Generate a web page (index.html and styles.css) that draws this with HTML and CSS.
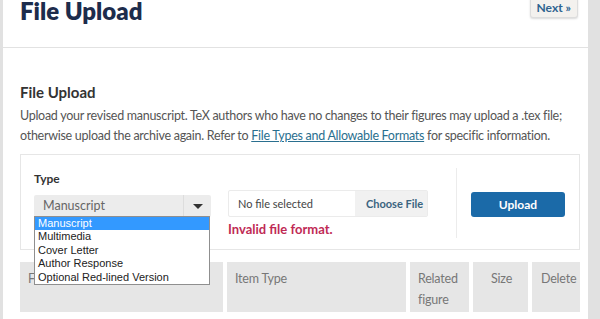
FILE: index.html
```html
<!DOCTYPE html>
<html>
<head>
  <meta charset="UTF-8">
  <title>File Upload</title>
  <link rel="stylesheet" href="styles.css">
</head>
<body>
  <div class="page">
    <div class="header">
      <h1>File Upload</h1>
      <a class="next" href="#">Next &raquo;</a>
    </div>

    <div class="section">
      <h3>File Upload</h3>
      <p>Upload your revised manuscript. TeX authors who have no changes to their figures may upload a .tex file;
        otherwise upload the archive again. Refer to <a href="#">File Types and Allowable Formats</a> for specific information.</p>

      <div class="panel">
        <div class="type-col">
          <label>Type</label>
          <div class="select">
            <span class="value">Manuscript</span>
            <span class="arrow"></span>
            <ul class="options">
              <li class="active">Manuscript</li>
              <li>Multimedia</li>
              <li>Cover Letter</li>
              <li>Author Response</li>
              <li>Optional Red-lined Version</li>
            </ul>
          </div>
        </div>
        <div class="file-col">
          <div class="file">
            <span class="fname">No file selected</span>
            <span class="choose">Choose File</span>
          </div>
          <div class="error">Invalid file format.</div>
        </div>
        <div class="btn-col">
          <button class="upload">Upload</button>
        </div>
      </div>

      <div class="table-head">
        <div class="th">File name</div>
        <div class="th">Item Type</div>
        <div class="th">Related figure</div>
        <div class="th">Size</div>
        <div class="th">Delete</div>
      </div>
    </div>
  </div>
</body>
</html>
```

FILE: styles.css
```css
body {margin:0;background:#e1e1e1;font-family:Lato,"Open Sans",sans-serif;color:#555;}
.page {background:#fff;margin-left:3px;width:585px;height:319px;overflow:hidden;}

.header {display:flex;justify-content:space-between;align-items:flex-start;height:47px;
  border-bottom:1px solid #e2e2e2;padding:0 10px 0 17px;}
h1 {margin:-4px 0 0;font-size:24px;line-height:30px;color:#1d2c4c;font-weight:800;}
.next {margin-top:-4px;padding:3px 6px 2px;font-size:12px;font-weight:bold;color:#2d6390;text-decoration:none;
  background:#f3f1ee;border:1px solid #ddd;border-radius:3px;box-shadow:0 1px 2px rgba(0,0,0,0.15);}

.section {padding:0 8px 0 17px;}
h3 {margin:34px 0 4px;font-size:15px;line-height:20px;color:#333;}
p {margin:0;font-size:12.5px;line-height:20px;letter-spacing:-0.28px;}
p a {color:#2a6f8f;}

.panel {display:flex;border:1px solid #e6e6e6;height:96px;margin-top:8px;box-sizing:border-box;}
.type-col {width:177px;padding:16px 0 0 13px;}
label {display:block;font-size:12px;font-weight:bold;color:#333;margin-bottom:9px;}
.select {position:relative;display:flex;height:22px;background:#ececec;border-radius:2px;}
.value {flex:1;font-size:12.5px;line-height:22px;padding-left:9px;color:#666;border-right:1px solid #ddd;}
.arrow {width:27px;position:relative;}
.arrow:after {content:"";position:absolute;left:9px;top:9px;border:5px solid transparent;border-top:5px solid #333;border-bottom:0;}
.options {position:absolute;left:0;top:21px;width:174px;margin:0;padding:0;list-style:none;background:#fff;
  border:1px solid #8f8f8f;font-family:"Liberation Sans",Arial,sans-serif;font-size:11px;line-height:13.4px;color:#222;z-index:2;}
.options li {padding-left:3px;}
.options li.active {background:#3399ff;color:#fff;}

.file-col {padding:22px 0 0 17px;width:228px;flex-shrink:0;border-right:1px solid #ececec;margin:13px 0 11px;}
.file {display:flex;width:200px;height:27px;border:1px solid #ebebeb;box-sizing:border-box;border-radius:2px;font-size:11px;line-height:25px;}
.fname {width:117px;padding-left:9px;color:#444;}
.choose {flex:1;background:#f1f1f1;color:#3b6480;font-weight:bold;padding-left:11px;}
.error {margin-top:4px;font-size:13px;font-weight:bold;color:#bf2a55;}

.btn-col {flex:1;padding:37px 0 0 14px;}
.upload {width:94px;height:25px;border:0;border-radius:3px;background:#1b6aa8;color:#fff;
  font-family:inherit;font-size:12px;font-weight:bold;}

.table-head {display:flex;gap:4px;margin-top:12px;height:50px;}
.th {flex-shrink:0;background:#e6e6e6;color:#777;font-size:12.5px;line-height:21px;letter-spacing:-0.2px;
  padding:6px 8px;box-sizing:border-box;white-space:nowrap;}
.th:nth-child(1) {width:203px;}
.th:nth-child(2) {width:179px;}
.th:nth-child(3) {width:59px;white-space:normal;}
.th:nth-child(4) {width:55px;padding-left:18px;}
.th:nth-child(5) {width:48px;padding:6px 0 6px 9px;}
```
